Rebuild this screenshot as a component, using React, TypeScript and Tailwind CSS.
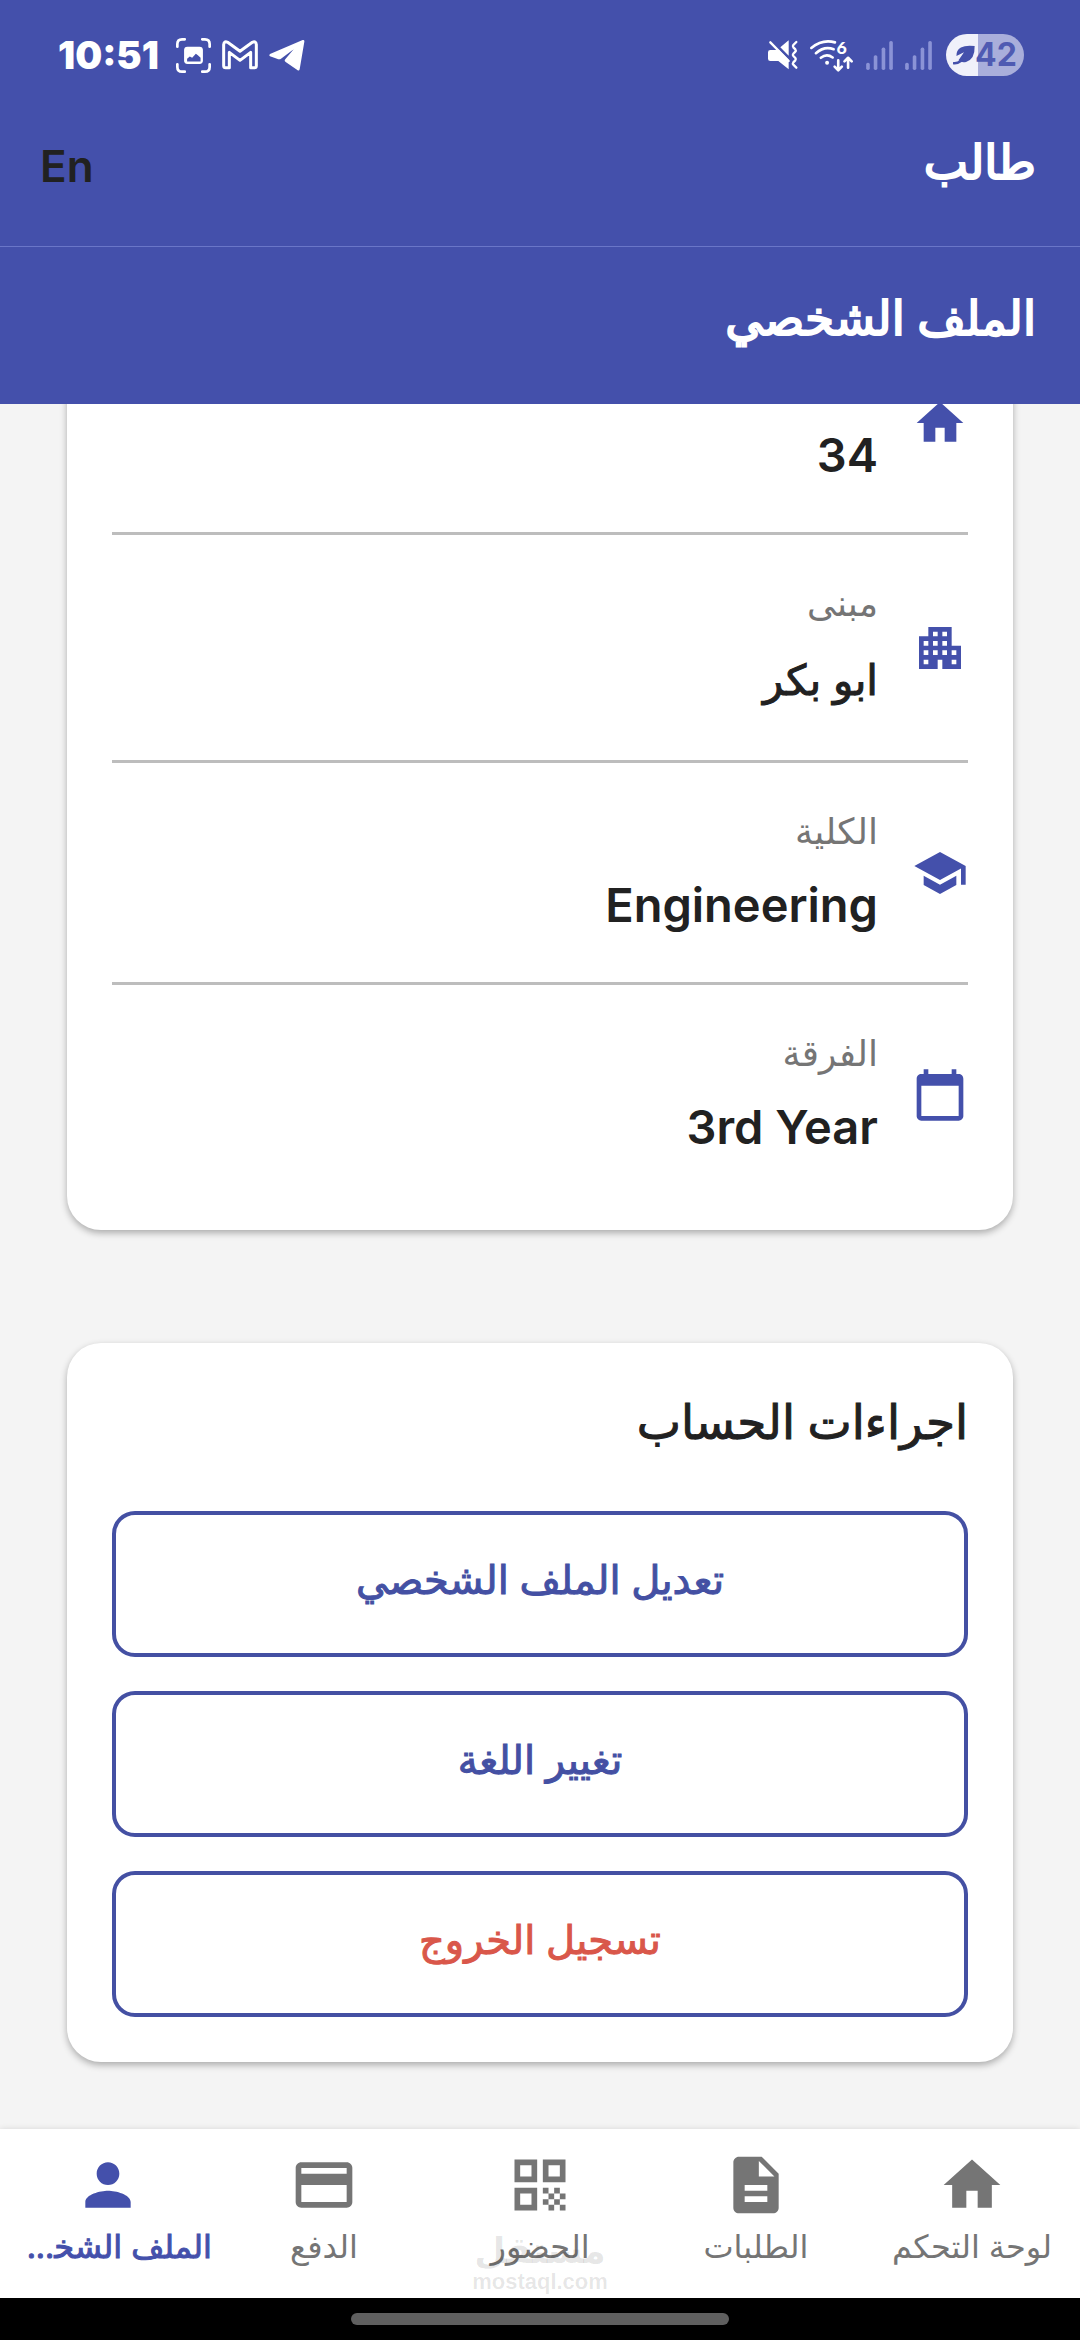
import type { ComponentType } from "react"
import {
  MdApartment,
  MdCalendarToday,
  MdCreditCard,
  MdDescription,
  MdHome,
  MdPerson,
  MdQrCode,
  MdSchool,
} from "react-icons/md"

type Icon = ComponentType<{ className?: string }>

type Detail = { label: string; value: string; icon: Icon; arabic?: boolean }

const details: Detail[] = [
  { label: "الغرفة", value: "34", icon: MdHome },
  { label: "مبنى", value: "ابو بكر", icon: MdApartment, arabic: true },
  { label: "الكلية", value: "Engineering", icon: MdSchool },
  { label: "الفرقة", value: "3rd Year", icon: MdCalendarToday },
]

const actions = [
  { label: "تعديل الملف الشخصي", danger: false },
  { label: "تغيير اللغة", danger: false },
  { label: "تسجيل الخروج", danger: true },
]

const tabs: { label: string; icon: Icon; active?: boolean }[] = [
  { label: "لوحة التحكم", icon: MdHome },
  { label: "الطلبات", icon: MdDescription },
  { label: "الحضور", icon: MdQrCode },
  { label: "الدفع", icon: MdCreditCard },
  { label: "الملف الشخ\u200d...", icon: MdPerson, active: true },
]

function CaptureIcon() {
  return (
    <svg viewBox="531 114 104 104" className="size-[35px]" fill="none">
      <g stroke="white" strokeWidth="8" strokeLinecap="round">
        <path d="M535 140v-8q0-14 14-14h8M609 118h8q14 0 14 14v8M631 192v8q0 14-14 14h-8M557 214h-8q-14 0-14-14v-8" />
      </g>
      <rect x="555" y="140" width="56" height="51" rx="10" fill="white" />
      <path d="M564 184v-8l8-7 7 4 11-12 6 4 8 8v11z" fill="#4450ab" />
    </svg>
  )
}

function GmailIcon() {
  return (
    <svg viewBox="670 120 108 90" className="h-[30px] w-9" fill="none">
      <path
        d="M675 134q1-12 12-7l37 27 37-27q11-5 12 7v63q0 6-6 6h-11v-46l-32 24-32-24v46h-11q-6 0-6-6z"
        stroke="white"
        strokeWidth="9"
        strokeLinejoin="round"
      />
    </svg>
  )
}

function TelegramIcon() {
  return (
    <svg viewBox="812 121 108 96" className="h-8 w-9">
      <path
        d="M815 166L913 124q6-1 5 5l-14 83q-2 6-7 2l-35-24q-6-4 0-10l24-28-38 28q-5 3-12 0l-21-7q-4-3 0-7z"
        fill="white"
      />
    </svg>
  )
}

function MutedIcon() {
  return (
    <svg viewBox="45 60 90 90" className="size-[30px]" fill="none">
      <path d="M52 90h18l8 0 29 29v29l-31-25H52q-7 0-7-7v-19q0-7 7-7z" fill="white" />
      <path d="M82 82l25-21v46z" fill="white" />
      <path d="M52 67l55 56" stroke="white" strokeWidth="7" strokeLinecap="round" />
      <path
        d="M130 66l-9 9q-3 4 0 7l6 6q3 4 0 7l-6 6q-3 4 0 7l6 6q3 4 0 7l-6 6q-3 4 0 7l9 9"
        stroke="white"
        strokeWidth="7"
        strokeLinecap="round"
      />
    </svg>
  )
}

function WifiIcon() {
  return (
    <svg viewBox="178 55 134 100" className="h-[33px] w-11 overflow-visible" fill="none">
      <g stroke="white" strokeWidth="8" strokeLinecap="round" strokeLinejoin="round">
        <path d="M182 82q34-28 72-17M196 98q26-23 54-12M211 112q18-14 36-1" />
        <path d="M264 120v29M253 139l11 11 11-11M294 142v-29M283 123l11-11 11 11" />
      </g>
      <circle cx="230" cy="127" r="6" fill="white" />
      <text x="259" y="99" fontSize="54" fontWeight="900" fontFamily="Lato, sans-serif" fill="white">
        6
      </text>
    </svg>
  )
}

function SignalIcon() {
  return (
    <svg viewBox="339 60 81 88" className="h-[29px] w-[27px]" fill="#8b93d6">
      <rect x="339" y="126" width="11" height="22" rx="5" />
      <rect x="362" y="103" width="11" height="45" rx="5" />
      <rect x="386" y="80" width="11" height="68" rx="5" />
      <rect x="409" y="60" width="11" height="88" rx="5" />
    </svg>
  )
}

function LeafIcon() {
  return (
    <svg viewBox="600 76 64 58" className="h-5 w-[22px]" fill="none">
      <path d="M663 79q-26-3-40 4-14 8-13 25l22-11-16 23q8 8 22 5 26-7 25-46z" fill="#4450ab" />
      <path d="M602 129q20 2 34-22" stroke="#4450ab" strokeWidth="7" strokeLinecap="round" />
    </svg>
  )
}

function StatusBar() {
  return (
    <div dir="ltr" className="flex h-[110px] items-center justify-between pr-14 pl-[58px]">
      <div className="flex items-center gap-[11px]">
        <span className="mr-1.5 text-[38px] leading-none font-black">10:51</span>
        <CaptureIcon />
        <GmailIcon />
        <TelegramIcon />
      </div>
      <div className="flex items-center gap-3">
        <MutedIcon />
        <WifiIcon />
        <SignalIcon />
        <SignalIcon />
        <div className="ml-0.5 flex h-[42px] w-[78px] items-center justify-center rounded-full bg-linear-to-r from-[#f0f1fa] from-[41%] to-[#a9aedb] to-[41%]">
          <LeafIcon />
          <span className="text-[32px] leading-none font-bold text-[#4f5ab2]">42</span>
        </div>
      </div>
    </div>
  )
}

function Header() {
  return (
    <header className="z-10 shrink-0 bg-[#4450ab] text-white">
      <StatusBar />
      <div className="flex h-[137px] items-center justify-between border-b border-[#6a76c8] px-11 pb-6">
        <h1 className="pb-2 text-[47px] leading-[64px] font-medium [-webkit-text-stroke:2px]">طالب</h1>
        <button dir="ltr" className="-ml-1 text-[44px] leading-[64px] font-semibold text-[#212121]">
          En
        </button>
      </div>
      <div className="flex h-[157px] items-center px-11 pb-4">
        <h2 className="text-[47px] leading-[64px] font-medium [-webkit-text-stroke:2px]">الملف الشخصي</h2>
      </div>
    </header>
  )
}

function DetailRow({ label, value, icon: RowIcon, arabic }: Detail) {
  return (
    <li className="flex items-center gap-[34px] border-b-[3px] border-[#bdbdbd] py-9 last:border-b-0">
      <RowIcon className="size-14 shrink-0 text-[#4450ab]" />
      <div className="min-w-0">
        <p className="text-[36px] leading-[64px] text-[#757575]">{label}</p>
        <p
          className={`text-[#212121] ${
            arabic
              ? "text-[42px] leading-[89px] [-webkit-text-stroke:1px]"
              : "text-[47px] leading-[83px] font-semibold"
          }`}
        >
          {value}
        </p>
      </div>
    </li>
  )
}

function BottomNav() {
  return (
    <nav className="relative z-10 shrink-0 bg-white shadow-[0_0_6px_rgba(0,0,0,0.12)]">
      <ul className="grid h-[169px] grid-cols-5 pt-[22px]">
        {tabs.map(({ label, icon: TabIcon, active }) => (
          <li key={label}>
            <a
              href="#"
              aria-current={active ? "page" : undefined}
              className={`flex flex-col items-center text-[32px] whitespace-nowrap ${
                active ? "text-[#4450ab] [-webkit-text-stroke:1px]" : "text-[#757575]"
              }`}
            >
              <TabIcon className="size-[68px]" />
              <span className={`w-full px-1 leading-[56px] ${active ? "text-start" : "text-center"}`}>{label}</span>
            </a>
          </li>
        ))}
      </ul>
      <div className="pointer-events-none absolute inset-x-0 bottom-1 flex flex-col items-center font-bold text-black/10">
        <span className="text-[36px] leading-[40px]">مستقل</span>
        <span dir="ltr" className="font-['Liberation_Sans',sans-serif] text-[22px] leading-6">
          mostaql.com
        </span>
      </div>
    </nav>
  )
}

export default function App() {
  return (
    <div
      dir="rtl"
      className="flex h-screen flex-col overflow-hidden bg-[#f4f4f4] font-['Inter','DejaVu_Sans',sans-serif]"
    >
      <Header />

      {/* scrolled to the end, so the first card runs under the header */}
      <main className="flex min-h-0 flex-1 flex-col justify-end gap-[113px] px-[67px] pb-[67px]">
        <section className="rounded-[34px] bg-white px-[45px] pb-[26px] shadow-[0_3px_7px_rgba(0,0,0,0.3)]">
          <ul>
            {details.map(item => (
              <DetailRow key={item.label} {...item} />
            ))}
          </ul>
        </section>

        <section className="rounded-[34px] bg-white px-[45px] pt-[45px] pb-[45px] shadow-[0_3px_7px_rgba(0,0,0,0.3)]">
          <h3 className="text-[47px] leading-[68px] font-medium text-[#212121] [-webkit-text-stroke:1px]">
            اجراءات الحساب
          </h3>
          <div className="mt-[55px] flex flex-col gap-[34px]">
            {actions.map(({ label, danger }) => (
              <button
                key={label}
                className={`h-[146px] rounded-[23px] border-4 border-[#4450a3] pb-2 text-[40px] font-medium [-webkit-text-stroke:1px] ${
                  danger ? "text-[#d9574a]" : "text-[#4450a3]"
                }`}
              >
                {label}
              </button>
            ))}
          </div>
        </section>
      </main>

      <BottomNav />
      <div className="flex h-[42px] shrink-0 items-center justify-center bg-black">
        <div className="h-3 w-[378px] rounded-full bg-[#5f5f5f]" />
      </div>
    </div>
  )
}
